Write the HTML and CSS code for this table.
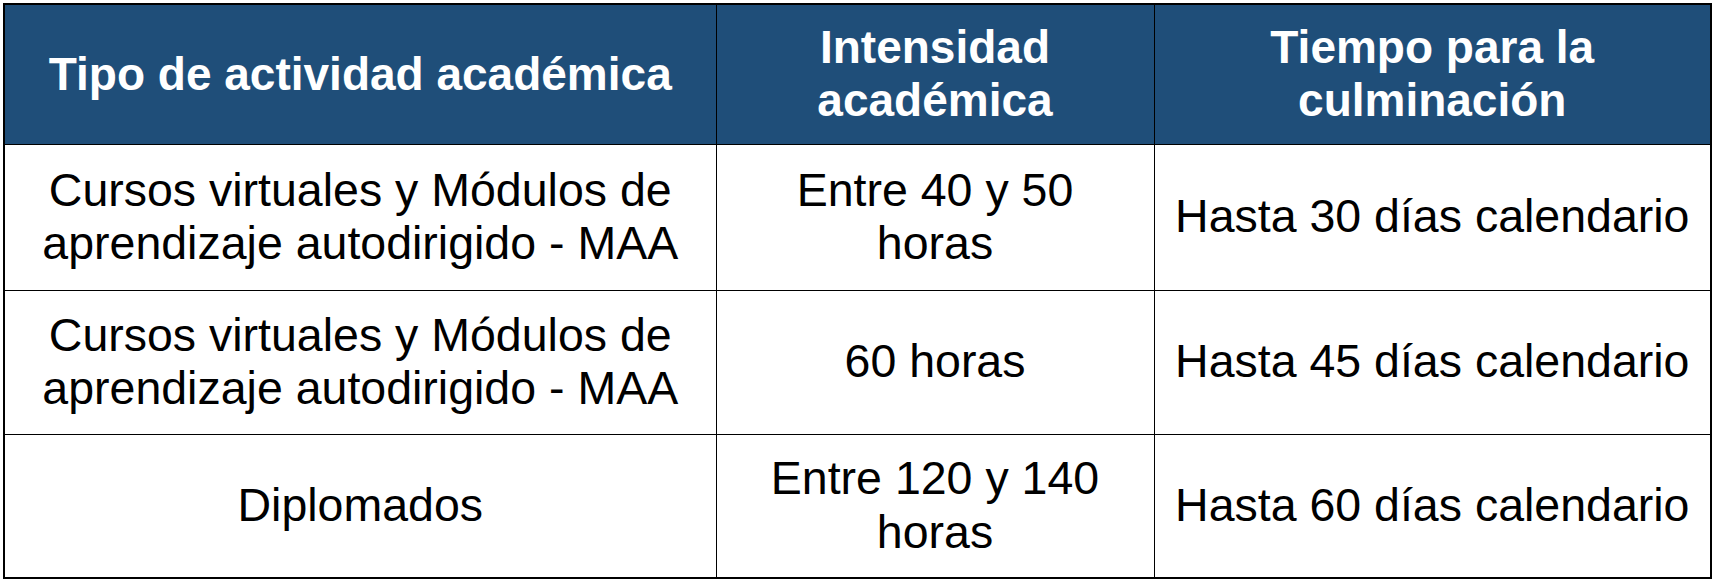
FILE: index.html
```html
<!DOCTYPE html>
<html lang="es">
<head>
<meta charset="utf-8">
<title>Tabla de actividades académicas</title>
<link rel="stylesheet" href="styles.css">
</head>
<body>
<table class="grid">
  <colgroup>
    <col class="c1">
    <col class="c2">
    <col class="c3">
  </colgroup>
  <thead>
    <tr class="head">
      <th>Tipo de actividad académica</th>
      <th>Intensidad académica</th>
      <th>Tiempo para la culminación</th>
    </tr>
  </thead>
  <tbody>
    <tr class="r1">
      <td>Cursos virtuales y Módulos de aprendizaje autodirigido - MAA</td>
      <td>Entre 40 y 50 horas</td>
      <td class="nw">Hasta 30 días calendario</td>
    </tr>
    <tr class="r2">
      <td>Cursos virtuales y Módulos de aprendizaje autodirigido - MAA</td>
      <td>60 horas</td>
      <td class="nw">Hasta 45 días calendario</td>
    </tr>
    <tr class="r3">
      <td>Diplomados</td>
      <td>Entre 120 y 140 horas</td>
      <td class="nw">Hasta 60 días calendario</td>
    </tr>
  </tbody>
</table>
</body>
</html>
```

FILE: styles.css
```css
html, body {
  margin: 0;
  padding: 0;
  background: #ffffff;
}

body {
  font-family: "Liberation Sans", Arial, sans-serif;
  color: #000000;
}

.grid {
  margin: 3px 0 0 3px;
  width: 1707px;
  table-layout: fixed;
  border-collapse: collapse;
  border: 2px solid #000000;
}

.c1 { width: 712px; }
.c2 { width: 438px; }
.c3 { width: 557px; }

.grid th,
.grid td {
  border: 1px solid #000000;
  padding: 0 20px;
  text-align: center;
  vertical-align: middle;
  line-height: 1.15;
}

.grid th {
  background: #1f4e79;
  color: #ffffff;
  font-weight: 700;
  font-size: 46px;
}

.grid td {
  font-size: 46.5px;
}

.head { height: 140px; }
.r1 { height: 146px; }
.r2 { height: 144px; }
.r3 { height: 144px; }

.nw {
  white-space: nowrap;
  padding: 0;
}
```
